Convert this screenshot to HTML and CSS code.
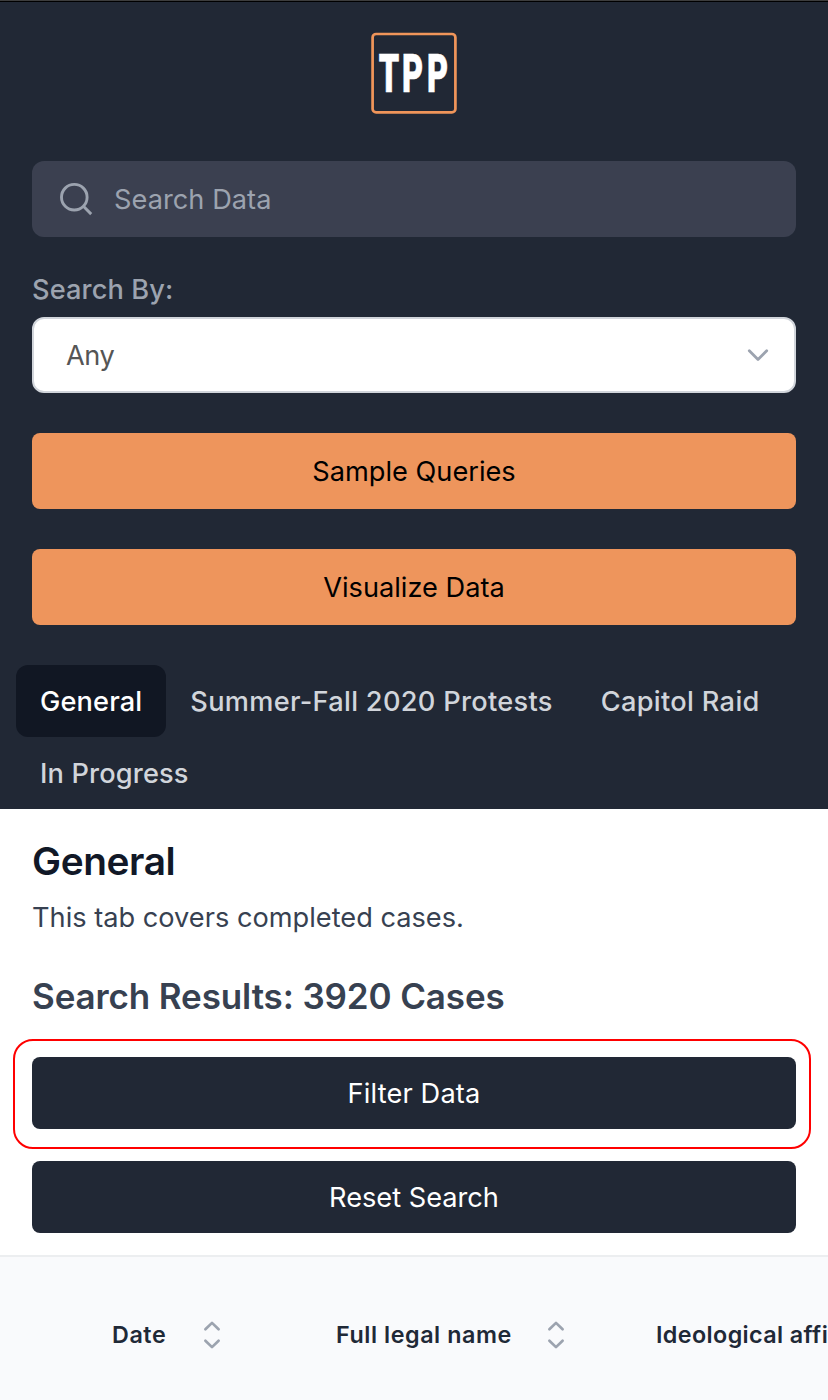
FILE: index.html
```html
<!DOCTYPE html>
<html lang="en">
<head>
<meta charset="utf-8">
<title>TPP</title>
<link rel="stylesheet" href="styles.css">
</head>
<body>
<header class="header">
  <svg class="logo" width="86" height="82" viewBox="0 0 86 82">
    <rect x="1.6" y="2" width="82.8" height="78.4" rx="3.5" fill="none" stroke="#f0955a" stroke-width="2.7"/>
    <g class="logo-text">
      <text transform="translate(7.7 59.6) scale(.6 1)">T</text>
      <text transform="translate(31.1 59.6) scale(.6 1)">P</text>
      <text transform="translate(56.1 59.6) scale(.6 1)">P</text>
    </g>
  </svg>
  <div class="search">
    <svg width="40" height="40" viewBox="0 0 40 40" fill="none" stroke="#9ca3af" stroke-width="2.9"><circle cx="17.3" cy="18.2" r="12.8"/><path d="M26.4 27.3 34.2 35.1"/></svg>
    <span class="placeholder">Search Data</span>
  </div>
  <div class="label"><span>Search By:</span></div>
  <div class="select">
    <span class="any">Any</span>
    <svg width="24" height="16" viewBox="0 0 24 16" fill="none" stroke="#9ca3af" stroke-width="2.8" stroke-linecap="round" stroke-linejoin="round"><path d="M3.3 3.8 12 12.5 20.7 3.8"/></svg>
  </div>
  <div class="button orange"><span>Sample Queries</span></div>
  <div class="button orange"><span>Visualize Data</span></div>
  <nav class="tabs">
    <a class="tab active"><span>General</span></a>
    <a class="tab protests"><span>Summer-Fall 2020 Protests</span></a>
    <a class="tab capitol"><span>Capitol Raid</span></a>
    <a class="tab"><span>In Progress</span></a>
  </nav>
</header>
<main class="main">
  <h1>General</h1>
  <p>This tab covers completed cases.</p>
  <h2>Search Results: 3920 Cases</h2>
  <div class="highlight"><div class="button dark filter"><span>Filter Data</span></div></div>
  <div class="button dark reset"><span>Reset Search</span></div>
</main>
<section class="table">
  <div class="col date"><span>Date</span><svg width="20" height="30" viewBox="0 0 20 30"><path d="M3.4 9.3 10 2.9 16.6 9.3M3.4 20.7 10 27.1 16.6 20.7"/></svg></div>
  <div class="col name"><span>Full legal name</span><svg width="20" height="30" viewBox="0 0 20 30"><path d="M3.4 9.3 10 2.9 16.6 9.3M3.4 20.7 10 27.1 16.6 20.7"/></svg></div>
  <div class="col ideology"><span>Ideological affiliation</span></div>
</section>
</body>
</html>
```
FILE: styles.css
```css
* { box-sizing: border-box; }
body { margin: 0; width: 828px; height: 1400px; overflow: hidden; background: #fff; font-family: Inter, sans-serif; font-size: 27.2px; line-height: 40px; white-space: nowrap; }
svg { display: block; flex: none; }
.header { height: 809px; background: #212835; border-top: 1px solid #3d3d3d; box-shadow: inset 0 1px #000; padding: 31px 32px 0; display: flex; flex-direction: column; }
.logo { align-self: center; }
.logo-text { font-family: Roboto, sans-serif; font-weight: 900; font-size: 54px; fill: #fff; stroke: #fff; stroke-width: .7px; }
.search { margin-top: 47px; height: 76px; border-radius: 12px; background: #3b4050; color: #9ca3af; display: flex; align-items: center; padding-left: 25px; }
.placeholder { margin-left: 17px; padding-top: 1px; letter-spacing: .04px; }
.label { margin-top: 33px; height: 39px; color: #9ca3af; font-weight: 500; letter-spacing: .1px; }
.select { margin-top: 8px; height: 76px; border: 2px solid #d1d5db; border-radius: 12px; background: #fff; color: #555; display: flex; align-items: center; justify-content: space-between; padding: 0 24px 0 32px; }
.any { letter-spacing: -.4px; padding-top: 1px; }
.button { height: 76px; border-radius: 8px; display: flex; align-items: center; justify-content: center; }
.orange { background: #ee955c; color: #000; margin-top: 40px; padding-top: 1px; }
.tabs { margin: 40px -16px 0; display: flex; flex-wrap: wrap; }
.tab { height: 72px; padding: 1px 24px 0; display: flex; align-items: center; border-radius: 12px; font-weight: 500; color: #d1d5db; letter-spacing: .15px; }
.active { background: #111723; color: #fff; }
.protests { letter-spacing: .29px; }
.capitol { letter-spacing: .33px; }
.main { height: 446px; padding: 28px 32px 0; }
h1 { margin: 0; font-size: 38.8px; line-height: 48px; font-weight: 600; color: #111827; letter-spacing: -.4px; }
p { margin: 13px 0 0; color: #374151; }
h2 { margin: 30px 0 0; font-size: 35px; line-height: 56px; font-weight: 600; color: #374151; letter-spacing: -.12px; }
.highlight { margin: 15px -15px 0 -19px; height: 110px; border: 2px solid #f00; border-radius: 20px; padding: 16px 13px 0 17px; }
.dark { background: #212835; color: #fff; height: 72px; padding-top: 1px; }
.filter { letter-spacing: .15px; }
.reset { margin-top: 12px; }
.table { height: 145px; overflow: hidden; background: #f9fafc; border-top: 2px solid #eceef0; padding: 13px 0 0 112px; display: flex; align-items: center; font-size: 23.3px; font-weight: 600; color: #1f2937; letter-spacing: .56px; }
.table svg { fill: none; stroke: #9ca3af; stroke-width: 2.7; stroke-linecap: round; stroke-linejoin: round; }
.col { flex: none; display: flex; align-items: center; justify-content: space-between; }
.date { width: 110px; margin-right: 114px; }
.name { width: 230px; margin-right: 90px; }
.ideology { width: 172px; overflow: hidden; letter-spacing: .4px; }
```
